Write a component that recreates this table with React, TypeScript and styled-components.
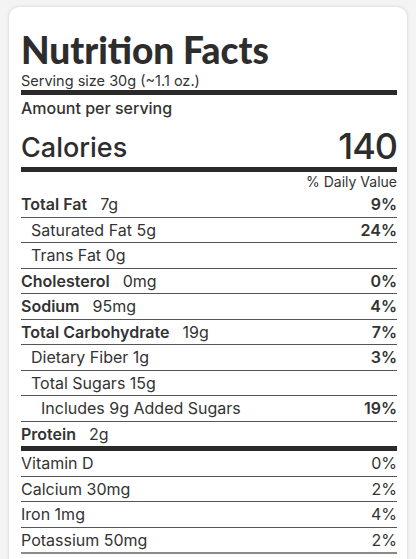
import React from "react";
import styled, { createGlobalStyle } from "styled-components";

const Global = createGlobalStyle`
  html, body { margin: 0; padding: 0; background: #f4f4f4; }
  body { font-family: Inter, "Open Sans", Arial, sans-serif; color: #333; }
`;

const Page = styled.div`
  padding: 6px 8px 0 8px;
  width: 416px;
  box-sizing: border-box;
`;

const Card = styled.div`
  background: #fff;
  border: 1px solid #e6e6e6;
  border-bottom: none;
  border-radius: 11px 11px 0 0;
  box-shadow: 0 0 4px rgba(0, 0, 0, 0.06);
  padding: 22px 10px 6px 12px;
  height: 560px;
  box-sizing: border-box;
`;

const Title = styled.h1`
  margin: 0;
  font-family: Lato, sans-serif;
  font-weight: 900;
  font-size: 37px;
  line-height: 42px;
  color: #2d2d2d;
`;

const Serving = styled.div`
  font-size: 14.5px;
  line-height: 18px;
  margin-top: 1px;
  color: #333;
`;

const ThickBar = styled.div<{ $h?: number }>`
  height: ${(p) => p.$h ?? 5}px;
  background: #2a2a2a;
`;

const Amount = styled.div`
  font-size: 16px;
  font-weight: 500;
  line-height: 24px;
  padding-top: 1px;
`;

const CaloriesRow = styled.div`
  display: flex;
  justify-content: space-between;
  align-items: flex-end;
  height: 47px;
`;

const CalLabel = styled.span`
  font-size: 27px;
  font-weight: 500;
  line-height: 34px;
  padding-bottom: 2px;
  color: #2d2d2d;
`;

const CalValue = styled.span`
  font-size: 36px;
  font-weight: 500;
  line-height: 42px;
  letter-spacing: -1px;
  color: #2d2d2d;
`;

const DailyHead = styled.div`
  text-align: right;
  font-size: 14px;
  line-height: 20px;
  font-weight: 400;
`;

const Row = styled.div<{ $indent?: number; $last?: boolean; $noLine?: boolean }>`
  display: flex;
  justify-content: space-between;
  align-items: center;
  font-size: 16px;
  line-height: 20.5px;
  padding: 2px 0 2px ${(p) => p.$indent ?? 0}px;
  border-bottom: ${(p) =>
    p.$noLine ? "none" : p.$last ? "2px solid #8a8a8a" : "1px solid #555"};
`;

const Name = styled.span`
  font-weight: 600;
  margin-right: 13px;
`;

const Amt = styled.span`
  font-weight: 400;
`;

const Pct = styled.span<{ $bold?: boolean }>`
  font-weight: ${(p) => (p.$bold ? 600 : 400)};
`;

type Item = { name?: string; amt: string; pct?: string; indent?: number };

const main: Item[] = [
  { name: "Total Fat", amt: "7g", pct: "9%" },
  { amt: "Saturated Fat 5g", pct: "24%", indent: 10 },
  { amt: "Trans Fat 0g", indent: 10 },
  { name: "Cholesterol", amt: "0mg", pct: "0%" },
  { name: "Sodium", amt: "95mg", pct: "4%" },
  { name: "Total Carbohydrate", amt: "19g", pct: "7%" },
  { amt: "Dietary Fiber 1g", pct: "3%", indent: 10 },
  { amt: "Total Sugars 15g", indent: 10 },
  { amt: "Includes 9g Added Sugars", pct: "19%", indent: 20 },
];

const vitamins = [
  ["Vitamin D", "0%"],
  ["Calcium 30mg", "2%"],
  ["Iron 1mg", "4%"],
  ["Potassium 50mg", "2%"],
];

export default function App() {
  return (
    <>
      <Global />
      <Page>
        <Card>
          <Title>Nutrition Facts</Title>
          <Serving>Serving size 30g (~1.1 oz.)</Serving>
          <ThickBar $h={5} />
          <Amount>Amount per serving</Amount>
          <CaloriesRow>
            <CalLabel>Calories</CalLabel>
            <CalValue>140</CalValue>
          </CaloriesRow>
          <ThickBar $h={5} />
          <DailyHead>% Daily Value</DailyHead>
          {main.map((m, i) => (
            <Row key={i} $indent={m.indent}>
              <span>
                {m.name && <Name>{m.name}</Name>}
                <Amt>{m.amt}</Amt>
              </span>
              {m.pct && <Pct $bold>{m.pct}</Pct>}
            </Row>
          ))}
          <Row $noLine>
            <span>
              <Name>Protein</Name>
              <Amt>2g</Amt>
            </span>
          </Row>
          <ThickBar $h={5} />
          {vitamins.map(([n, p], i) => (
            <Row key={n} $last={i === vitamins.length - 1}>
              <span>{n}</span>
              <Pct>{p}</Pct>
            </Row>
          ))}
        </Card>
      </Page>
    </>
  );
}
